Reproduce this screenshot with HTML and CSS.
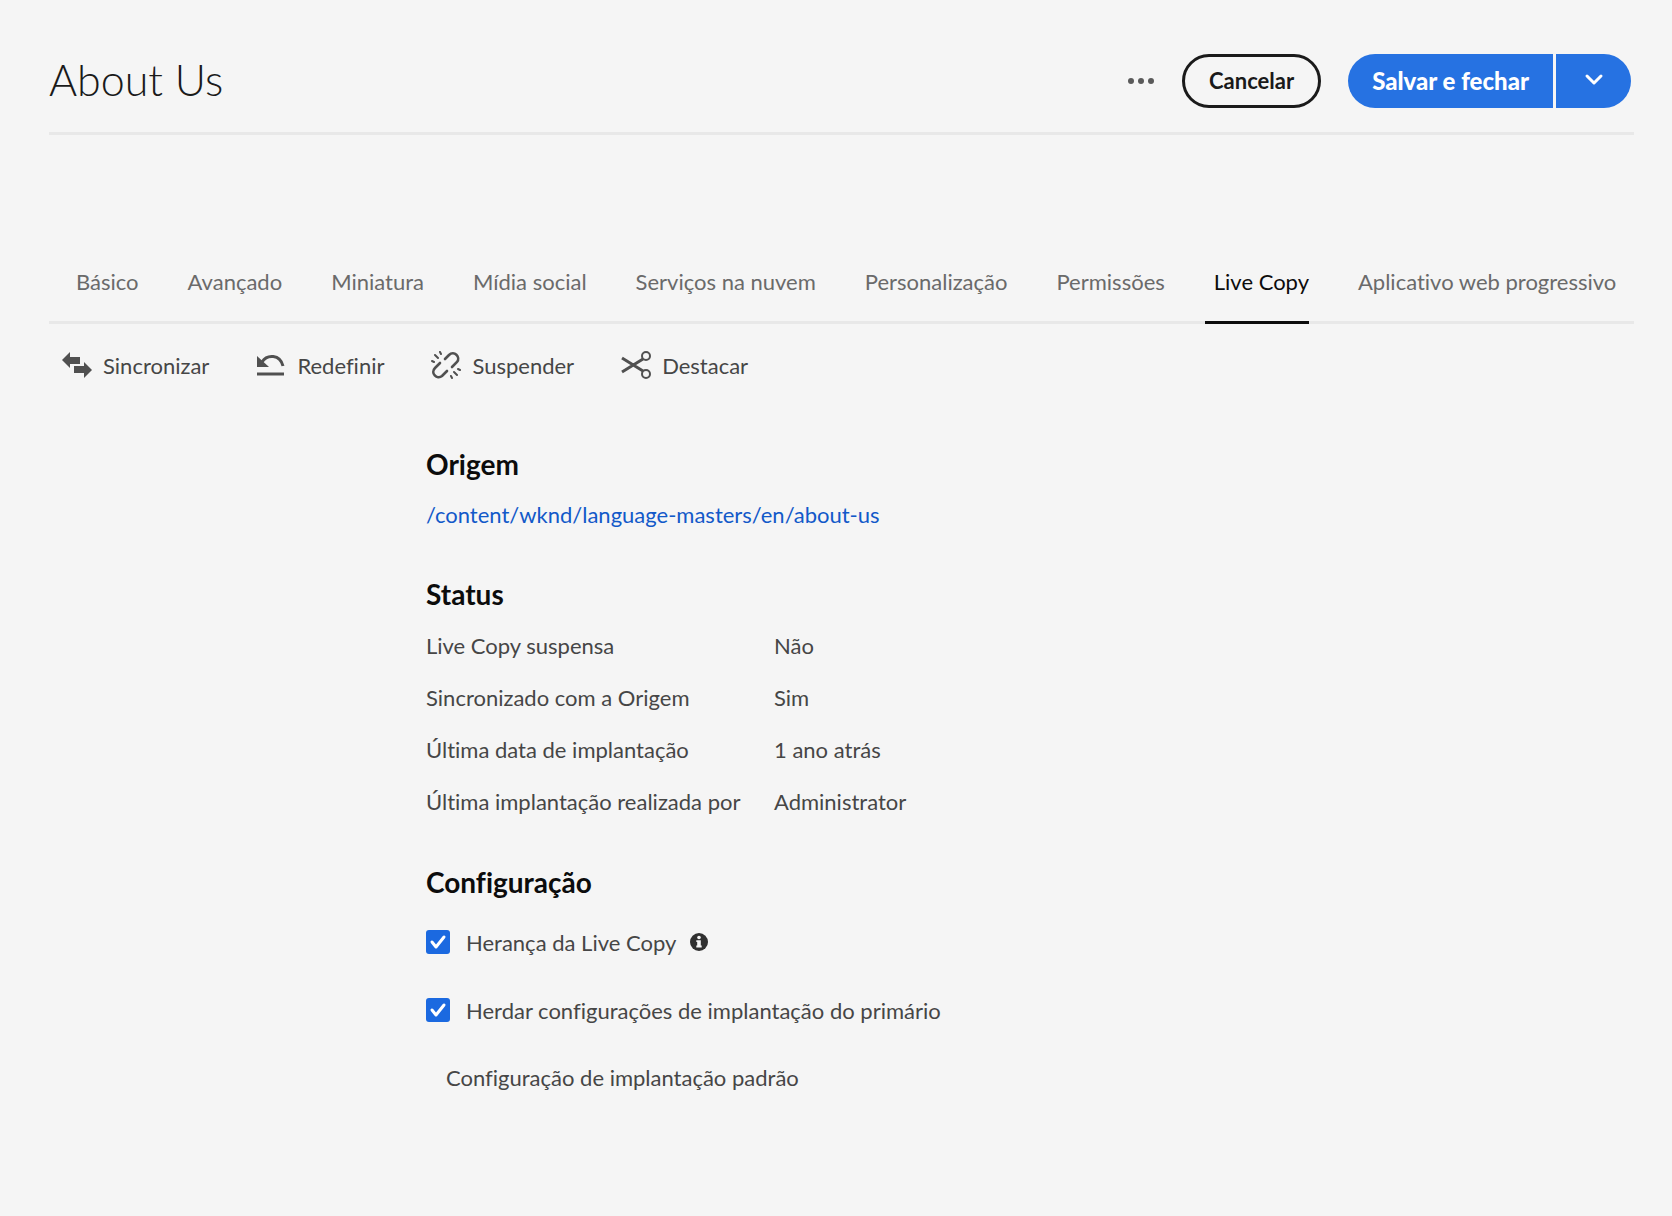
FILE: index.html
```html
<!DOCTYPE html>
<html lang="pt-BR">
<head>
  <meta charset="UTF-8" />
  <meta name="viewport" content="width=device-width, initial-scale=1.0" />
  <title>About Us</title>
  <link rel="stylesheet" href="styles.css">
</head>
<body>
  <header class="header">
    <h1>About Us</h1>
    <div class="header-actions">
      <button class="btn-more" type="button" aria-label="Mais">
        <svg width="28" height="8" viewBox="0 0 28 8" fill="#5a5a5a"><circle cx="4" cy="4" r="3"/><circle cx="14" cy="4" r="3"/><circle cx="24" cy="4" r="3"/></svg>
      </button>
      <button class="btn btn-cancel" type="button">Cancelar</button>
      <div class="btn-split">
        <button class="btn btn-save" type="button">Salvar e fechar</button>
        <button class="btn btn-save-menu" type="button" aria-label="Mais opções">
          <svg width="20" height="14" viewBox="0 0 20 14" fill="none" stroke="#fff" stroke-width="3" stroke-linecap="round" stroke-linejoin="round"><path d="M3 3l7 7 7-7"/></svg>
        </button>
      </div>
    </div>
  </header>

  <nav class="tabs">
    <a href="#">Básico</a>
    <a href="#">Avançado</a>
    <a href="#">Miniatura</a>
    <a href="#">Mídia social</a>
    <a href="#">Serviços na nuvem</a>
    <a href="#">Personalização</a>
    <a href="#">Permissões</a>
    <a href="#" class="active" aria-current="page">Live Copy</a>
    <a href="#">Aplicativo web progressivo</a>
  </nav>

  <div class="toolbar">
    <button type="button">
      <svg width="30" height="28" viewBox="0 0 30 28" fill="#505050"><path d="M0 9L8 1v5h10v7H8v4z"/><path d="M30 19l-8 8v-5H12v-7h10v-4z"/></svg>
      Sincronizar
    </button>
    <button type="button">
      <svg width="30" height="28" viewBox="0 0 30 28" fill="none" stroke="#505050"><path d="M1 5v11h12z" fill="#505050" stroke="none"/><path d="M6 11C11 3 24 3 27 15" stroke-width="3"/><path d="M1 23h27" stroke-width="3"/></svg>
      Redefinir
    </button>
    <button type="button">
      <svg width="30" height="28" viewBox="0 0 30 28" fill="none" stroke="#505050" stroke-width="2.6" stroke-linecap="round"><path d="M14 8l4-4c5-5 12 2 8 7l-5 5"/><path d="M9 12l-5 5c-5 5 2 12 7 8l5-5"/><path d="M9 1l1 2M4 4l3 3M1 10l2 1M20 25l1 2M23 21l3 3M27 18l2 1" stroke-width="2"/></svg>
      Suspender
    </button>
    <button type="button">
      <svg width="30" height="28" viewBox="0 0 30 28" fill="none" stroke="#505050"><path d="M1 7l21 13M1 21L22 8" stroke-width="3"/><circle cx="25" cy="5" r="4" stroke-width="2"/><circle cx="25" cy="23" r="4" stroke-width="2"/></svg>
      Destacar
    </button>
  </div>

  <main class="content">
    <section>
      <h2>Origem</h2>
      <a class="source-link" href="#">/content/wknd/language-masters/en/about-us</a>
    </section>

    <section>
      <h2>Status</h2>
      <table class="status">
        <tr><th scope="row">Live Copy suspensa</th><td>Não</td></tr>
        <tr><th scope="row">Sincronizado com a Origem</th><td>Sim</td></tr>
        <tr><th scope="row">Última data de implantação</th><td>1 ano atrás</td></tr>
        <tr><th scope="row">Última implantação realizada por</th><td>Administrator</td></tr>
      </table>
    </section>

    <section>
      <h2>Configuração</h2>
      <div class="option">
        <input type="checkbox" id="inheritance" checked>
        <label for="inheritance">Herança da Live Copy</label>
        <svg class="info" width="18" height="18" viewBox="0 0 20 20"><circle cx="10" cy="10" r="10" fill="#303030"/><circle cx="10" cy="5" r="2" fill="#f5f5f5"/><path d="M8 8h4v6h1v2H7v-2h1v-4H7V8z" fill="#f5f5f5"/></svg>
      </div>
      <div class="option">
        <input type="checkbox" id="rollout" checked>
        <label for="rollout">Herdar configurações de implantação do primário</label>
      </div>
      <p class="rollout-config">Configuração de implantação padrão</p>
    </section>
  </main>
</body>
</html>
```
FILE: styles.css
```css
* {
  box-sizing: border-box;
}
body {
  margin: 0;
  padding: 54px 38px 0 49px;
  background: #f5f5f5;
  color: #464646;
  font-family: Lato, "Noto Sans", sans-serif;
  font-size: 22px;
  font-variant-ligatures: none;
}
button {
  font: inherit;
  border: none;
  background: none;
  cursor: pointer;
}
a {
  text-decoration: none;
}
svg {
  display: block;
  flex-shrink: 0;
}

/* header */
.header {
  display: flex;
  justify-content: space-between;
  align-items: center;
  padding-bottom: 24px;
  border-bottom: 3px solid #e8e8e8;
}
h1 {
  margin: 0;
  font-size: 43px;
  line-height: 52px;
  padding-bottom: 2px;
  font-weight: 300;
  color: #1a1a1a;
}
.header-actions {
  display: flex;
  align-items: center;
  gap: 27px;
  padding-right: 3px;
}
.btn-more {
  padding: 0;
}
.btn {
  height: 54px;
  padding: 0 24px 2px;
  border-radius: 27px;
  font-weight: 700;
}
.btn-cancel {
  border: 3px solid #1a1a1a;
  color: #1a1a1a;
}
.btn-split {
  display: flex;
  gap: 3px;
}
.btn-save {
  background: #2672e2;
  color: #fff;
  border-radius: 27px 0 0 27px;
  font-size: 24px;
  font-weight: 900;
}
.btn-save-menu {
  width: 75px;
  background: #2672e2;
  border-radius: 0 27px 27px 0;
  display: flex;
  align-items: center;
  justify-content: center;
}

/* tabs */
.tabs {
  display: flex;
  gap: 40px;
  margin-top: 108px;
  padding-left: 18px;
  border-bottom: 3px solid #e8e8e8;
}
.tabs a {
  padding-left: 9px;
  margin-bottom: -3px;
  line-height: 78px;
  border-bottom: 3px solid transparent;
  color: #6a6a6a;
  white-space: nowrap;
}
.tabs a.active {
  color: #0c0c0c;
  border-color: #0c0c0c;
}

/* live copy actions */
.toolbar {
  display: flex;
  gap: 47px;
  padding-left: 13px;
}
.toolbar button {
  display: flex;
  align-items: center;
  gap: 11px;
  height: 82px;
  padding: 0;
  color: #464646;
}

/* content */
.content {
  padding: 32px 0 48px 377px;
}
section + section {
  margin-top: 28px;
}
h2 {
  margin: 0;
  font-size: 28px;
  line-height: 52px;
  font-weight: 700;
  color: #0c0c0c;
}
.source-link {
  display: block;
  line-height: 50px;
  color: #1259c9;
}
.status {
  border-collapse: collapse;
  line-height: 52px;
}
.status th {
  width: 348px;
  padding: 0;
  font-weight: 400;
  text-align: left;
}
.status td {
  padding: 0;
}
.option {
  display: flex;
  align-items: center;
  height: 68px;
}
.option input {
  appearance: none;
  width: 24px;
  height: 24px;
  margin: 0 16px 0 0;
  border-radius: 3px;
  background: #2672e2;
}
.option input:checked {
  background: #1b69e0 url("data:image/svg+xml,%3Csvg xmlns='http://www.w3.org/2000/svg' viewBox='0 0 24 24' fill='none' stroke='white' stroke-width='3' stroke-linecap='round' stroke-linejoin='round'%3E%3Cpath d='M6 12l4 5L18 7'/%3E%3C/svg%3E") center no-repeat;
}
.info {
  margin-left: 14px;
}
.rollout-config {
  margin: 0;
  padding-left: 20px;
  line-height: 68px;
}
```
